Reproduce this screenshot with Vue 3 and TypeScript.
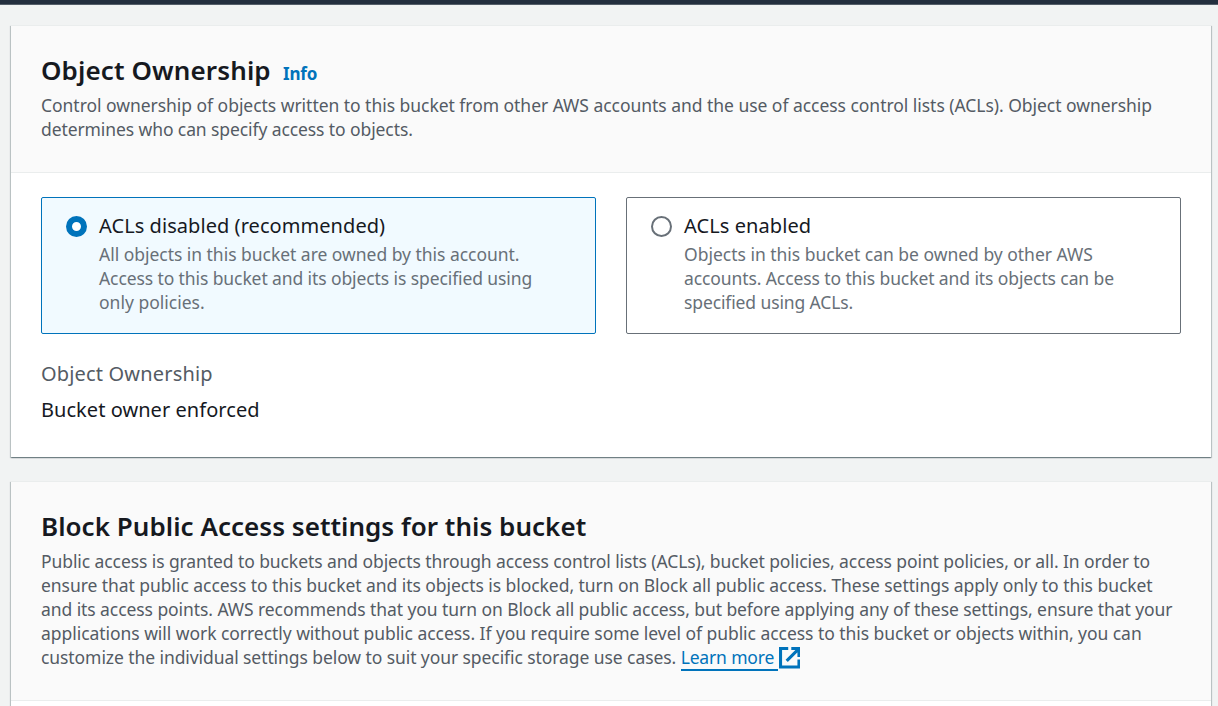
<script setup lang="ts">
import { ref } from 'vue'

interface Line {
  text: string
  tracking: number
}

interface Option {
  id: string
  title: Line
  description: Line[]
}

const selected = ref('disabled')

const spacing = (line: Line) => ({ letterSpacing: `${line.tracking}px` })

const ownershipIntro: Line[] = [
  { text: 'Control ownership of objects written to this bucket from other AWS accounts and the use of access control lists (ACLs). Object ownership', tracking: -0.037 },
  { text: 'determines who can specify access to objects.', tracking: -0.095 },
]

const options: Option[] = [
  {
    id: 'disabled',
    title: { text: 'ACLs disabled (recommended)', tracking: 0.06 },
    description: [
      { text: 'All objects in this bucket are owned by this account.', tracking: -0.03 },
      { text: 'Access to this bucket and its objects is specified using', tracking: -0.1 },
      { text: 'only policies.', tracking: 0 },
    ],
  },
  {
    id: 'enabled',
    title: { text: 'ACLs enabled', tracking: 0.08 },
    description: [
      { text: 'Objects in this bucket can be owned by other AWS', tracking: -0.01 },
      { text: 'accounts. Access to this bucket and its objects can be', tracking: -0.1 },
      { text: 'specified using ACLs.', tracking: -0.12 },
    ],
  },
]

const accessIntro: Line[] = [
  { text: 'Public access is granted to buckets and objects through access control lists (ACLs), bucket policies, access point policies, or all. In order to', tracking: -0.088 },
  { text: 'ensure that public access to this bucket and its objects is blocked, turn on Block all public access. These settings apply only to this bucket', tracking: -0.054 },
  { text: 'and its access points. AWS recommends that you turn on Block all public access, but before applying any of these settings, ensure that your', tracking: -0.075 },
  { text: 'applications will work correctly without public access. If you require some level of public access to this bucket or objects within, you can', tracking: -0.048 },
]
const accessLast: Line = { text: 'customize the individual settings below to suit your specific storage use cases.', tracking: -0.08 }
</script>

<template>
  <div class="page">
    <div class="topbar"></div>
    <main class="content">
      <section class="card">
        <header class="card-header">
          <div class="heading">
            <h2 class="owner-title">Object Ownership</h2>
            <a class="info">Info</a>
          </div>
          <p class="intro">
            <span v-for="line in ownershipIntro" :key="line.text" class="line" :style="spacing(line)">{{ line.text }}</span>
          </p>
        </header>
        <div class="card-body">
          <div class="tiles" role="radiogroup">
            <div
              v-for="option in options"
              :key="option.id"
              class="tile"
              :class="{ selected: selected === option.id }"
              role="radio"
              :aria-checked="selected === option.id"
              @click="selected = option.id"
            >
              <span class="radio"></span>
              <div>
                <div class="tile-title" :style="spacing(option.title)">{{ option.title.text }}</div>
                <div class="tile-text">
                  <span v-for="line in option.description" :key="line.text" class="line" :style="spacing(line)">{{ line.text }}</span>
                </div>
              </div>
            </div>
          </div>
          <div class="field-label">Object Ownership</div>
          <div class="field-value">Bucket owner enforced</div>
        </div>
      </section>

      <section class="card">
        <header class="card-header">
          <div class="heading">
            <h2 class="access-title">Block Public Access settings for this bucket</h2>
          </div>
          <p class="intro">
            <span v-for="line in accessIntro" :key="line.text" class="line" :style="spacing(line)">{{ line.text }}</span>
            <span class="line last">
              <span :style="spacing(accessLast)">{{ accessLast.text }}</span>
              <a class="learn">Learn more</a>
              <svg class="external" viewBox="1 1 14 14" fill="none" stroke="currentColor" stroke-width="2">
                <path d="M9 2h5v5.5M14 2 6 10" />
                <path d="M14 9.2V14H2V2h5" />
              </svg>
            </span>
          </p>
        </header>
        <div class="card-body"></div>
      </section>
    </main>
  </div>
</template>

<style>
body {
  background: #f1f3f3;
  overflow: hidden;
}
</style>

<style scoped>
.page {
  height: 706px;
  overflow: hidden;
  background: #f1f3f3;
  color: #16191f;
  font-family: "Noto Sans", "Open Sans", sans-serif;
}
.topbar {
  box-sizing: border-box;
  height: 5px;
  background: #232f3e;
  border-bottom: 1px solid #545e69;
}
.content {
  display: flex;
  flex-direction: column;
  gap: 24px;
  padding: 20px 7px 0 11px;
}
.card {
  background: #fff;
  border-top: 1px solid #eaeded;
  box-shadow:
    0 1px 1px 0 rgba(0, 28, 36, 0.3),
    1px 1px 1px 0 rgba(0, 28, 36, 0.18),
    -1px 1px 1px 0 rgba(0, 28, 36, 0.18);
}
.card-header {
  padding: 28px 30px 31px;
  background: #fafafa;
  border-bottom: 1px solid #eaeded;
}
.heading {
  display: flex;
  align-items: baseline;
  height: 32px;
  margin-bottom: 7px;
}
h2 {
  margin: 0;
  font-size: 26px;
  font-weight: 600;
  line-height: 32px;
  white-space: nowrap;
}
.owner-title {
  width: 242px;
  letter-spacing: 0.12px;
}
.access-title {
  letter-spacing: 0.03px;
}
.info {
  color: #0073bb;
  font-size: 17px;
  font-weight: 700;
  line-height: 24px;
  letter-spacing: -0.2px;
}
.intro {
  margin: 0;
  color: #545b64;
  font-size: 17.5px;
  line-height: 24px;
}
.line {
  display: block;
  height: 24px;
  white-space: nowrap;
}
.last {
  display: flex;
}
.learn {
  box-sizing: border-box;
  width: 97.5px;
  height: 26px;
  margin-left: 4.5px;
  color: #0073bb;
  letter-spacing: -0.16px;
  border-bottom: 2px solid #0073bb;
}
.external {
  flex: none;
  width: 21.5px;
  height: 21.5px;
  margin: 2.3px 0 0 0.8px;
  color: #0073bb;
}
.card-body {
  padding: 24px 30px 33px;
}
.tiles {
  display: grid;
  grid-template-columns: 1fr 1fr;
  gap: 30px;
  margin-bottom: 26px;
}
.tile {
  box-sizing: border-box;
  display: flex;
  gap: 12px;
  height: 137px;
  padding: 14px 24px 0;
  background: #fff;
  border: 1px solid #687078;
  border-radius: 2px;
}
.tile.selected {
  background: #f1faff;
  border-color: #0073bb;
}
.radio {
  box-sizing: border-box;
  flex: none;
  width: 21px;
  height: 21px;
  margin-top: 4px;
  background: #fff;
  border: 2px solid #687078;
  border-radius: 50%;
}
.selected .radio {
  border: 6px solid #0073bb;
}
.tile-title {
  height: 28px;
  margin-bottom: 2px;
  font-size: 20px;
  line-height: 28px;
  white-space: nowrap;
}
.tile-text {
  color: #687078;
  font-size: 17.5px;
  line-height: 24px;
}
.field-label,
.field-value {
  font-size: 20px;
  line-height: 28px;
}
.field-label {
  margin-bottom: 8px;
  color: #545b64;
  letter-spacing: 0.17px;
}
.field-value {
  letter-spacing: 0.05px;
}
</style>
